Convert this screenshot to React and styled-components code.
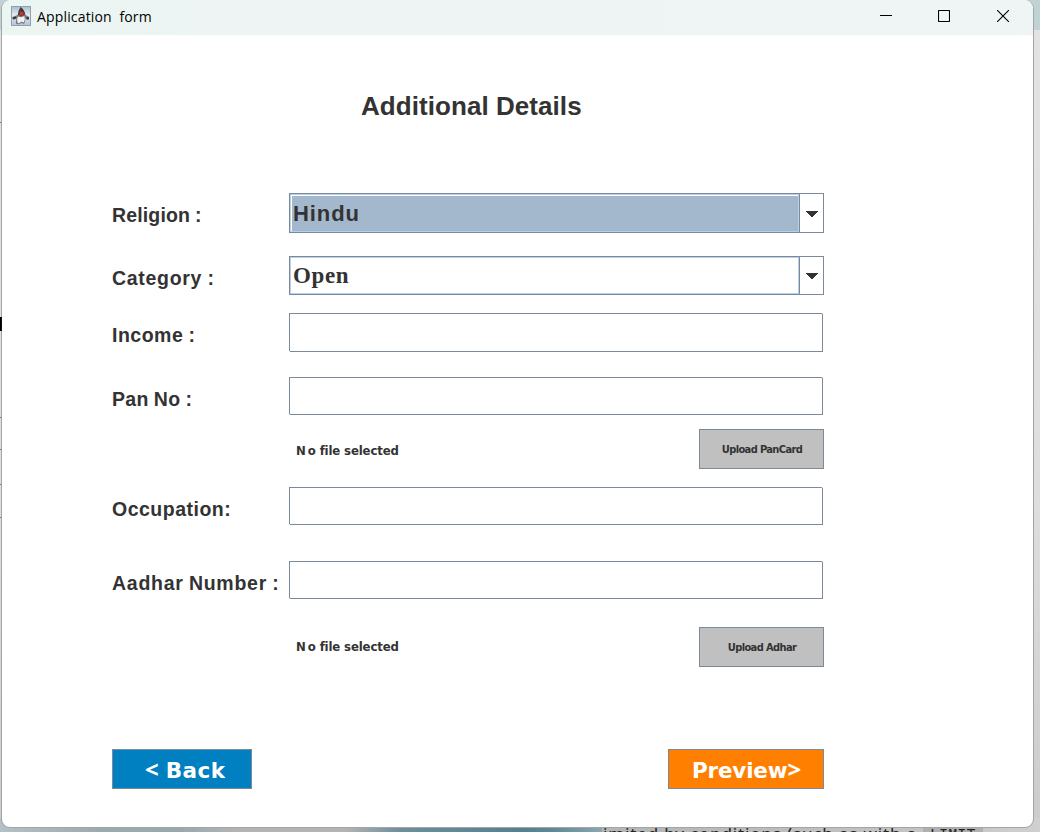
import React from "react";
import styled, { createGlobalStyle } from "styled-components";

const GlobalStyle = createGlobalStyle`
  * { box-sizing: border-box; }
  body { margin: 0; overflow: hidden; background: #d2d2d2; }
`;

const Desktop = styled.div`
  width: 1040px;
  height: 832px;
  overflow: hidden;
  display: flex;
  flex-direction: column;
  padding-left: 1px;
  background:
    linear-gradient(#000, #000) 0 317px / 2px 14px no-repeat,
    linear-gradient(#777, #777) 0 122px / 2px 1px no-repeat,
    linear-gradient(#777, #777) 0 417px / 2px 1px no-repeat,
    linear-gradient(#777, #777) 0 449px / 2px 1px no-repeat,
    linear-gradient(#65869c, #65869c) 0 484px / 2px 1px no-repeat,
    linear-gradient(#777, #777) 0 517px / 2px 1px no-repeat,
    linear-gradient(90deg, #b4c0c5 0, #9aabae 100px, #98a9ad 180px, #b4b4b4 240px, #b5b4b4 345px, #6d8f9b 400px, #55808f 520px, #5c8795 550px, #8ba7ad 602px, #b5b5b5 602px, #c6c6c6 960px, #d0d0d0 1040px) 0 818px / 100% 14px no-repeat,
    linear-gradient(#c1d2d2, #c1d2d2) 0 0 / 100% 30px no-repeat,
    linear-gradient(#e3e3e3 0, #dedede 500px, #cdcdcd 800px);
`;

const Window = styled.main`
  width: 1033px;
  height: 828px;
  flex: none;
  display: flex;
  flex-direction: column;
  overflow: hidden;
  background:
    linear-gradient(#111, #111) 0 317px / 1px 14px no-repeat border-box,
    linear-gradient(#fff, #fff) padding-box,
    #a2a6a7 border-box;
  border: 1px solid transparent;
  border-top: 0;
  border-radius: 9px;
`;

const TitleBar = styled.header`
  height: 35px;
  flex: none;
  display: flex;
  align-items: center;
  padding: 0 24px 3px 9px;
  background: linear-gradient(90deg, #ebf5f2, #eef4f4 30%, #eff4f5);
`;

const WindowTitle = styled.span`
  flex: 1;
  margin-left: 6px;
  padding-top: 2px;
  font: 14px/20px "Open Sans", "Noto Sans", sans-serif;
  letter-spacing: 0.16px;
  white-space: pre;
  color: #000;
`;

const WindowControls = styled.div`
  display: flex;
  gap: 46px;
  svg { display: block; }
  svg:last-child { margin-left: 1px; }
`;

const Form = styled.form`
  width: 712px;
  margin-left: 110px;
`;

const Heading = styled.h1`
  margin: 55px 0 0 249px;
  height: 32px;
  font: bold 26px/32px "Liberation Sans", Arial, sans-serif;
  letter-spacing: 0.06px;
  white-space: nowrap;
  color: #333;
`;

const Row = styled.div`
  display: grid;
  grid-template-columns: 177px 535px;
  height: ${(p) => p.$height}px;
  margin-top: ${(p) => p.$gap}px;
`;

const Label = styled.label`
  align-self: center;
  padding-top: ${(p) => p.$drop ?? 5}px;
  font: bold 19.5px/24px "Liberation Sans", Arial, sans-serif;
  letter-spacing: ${(p) => p.$spacing || 0}px;
  word-spacing: -0.8px;
  white-space: nowrap;
  color: #333;
`;

const Combo = styled.div`
  display: flex;
  border: 1px solid #7a8a99;
`;

const ComboValue = styled.div`
  flex: 1;
  display: flex;
  align-items: center;
  padding: ${(p) => (p.$focused ? 1 : 0)}px 0 0 2px;
  border: 1px solid #b8cfe5;
  background: ${(p) => (p.$focused ? "#a3b8cc" : "#fff")};
  box-shadow: ${(p) => (p.$focused ? "inset 1px 1px #fff" : "none")};
  font: ${(p) => (p.$serif
    ? 'bold 23px/28px "Liberation Serif", Cambria, serif'
    : 'bold 22px/28px "Liberation Sans", Arial, sans-serif')};
  letter-spacing: ${(p) => (p.$serif ? 0.6 : 0.9)}px;
  color: #333;
`;

const ComboButton = styled.div`
  width: 24px;
  display: grid;
  place-items: center;
  padding-top: ${(p) => (p.$focused ? 2 : 0)}px;
  border-left: 1px solid #7a8a99;
`;

const Field = styled.div`
  width: 534px;
  border: 1px solid #7a8a99;
  position: relative;
  &::before, &::after {
    content: "";
    position: absolute;
    width: 1px;
    height: 1px;
    background: #eef1f3;
  }
  &::before { left: -1px; bottom: -1px; }
  &::after { right: -1px; top: -1px; }
`;

const FileRow = styled.div`
  display: flex;
  justify-content: space-between;
  align-items: center;
  height: 40px;
  margin: ${(p) => p.$gap}px 0 0 184px;
`;

const FileStatus = styled.span`
  padding-top: ${(p) => p.$shift}px;
  font: bold 13px/18px "DejaVu Sans Condensed", "DejaVu Sans", sans-serif;
  font-stretch: condensed;
  letter-spacing: -0.13px;
  color: #333;
`;

const Initial = styled.span`
  letter-spacing: 2px;
`;

const UploadButton = styled.button`
  width: 125px;
  height: 40px;
  padding: 2px 0 0 1px;
  border: 1px solid #7a8a99;
  background: #c0c0c0;
  color: #333;
  font: bold 11px/16px "DejaVu Sans Condensed", "DejaVu Sans", sans-serif;
  font-stretch: condensed;
  letter-spacing: -0.62px;
`;

const Actions = styled.div`
  display: flex;
  justify-content: space-between;
  margin-top: 82px;
`;

const ActionButton = styled.button`
  width: ${(p) => p.$width}px;
  height: 40px;
  padding: 3px 0 0 ${(p) => p.$indent}px;
  border: 1px solid #7a8a99;
  background: ${(p) => p.$color};
  color: #fff;
  text-align: left;
  font: bold 21.5px/30px "DejaVu Sans", Verdana, sans-serif;
  letter-spacing: ${(p) => p.$spacing}px;
  word-spacing: -1.5px;
  white-space: pre;
`;

const Chevron = styled.span`
  font-family: "Noto Sans", sans-serif;
  font-size: 24px;
  line-height: 1;
`;

const PageBehind = styled.div`
  height: 4px;
  flex: none;
  overflow: hidden;
  display: flex;
  align-items: flex-start;
  padding-left: 602px;
  font: 17px/20px "Noto Sans", sans-serif;
  letter-spacing: 0.85px;
  white-space: pre;
  color: #222;
`;

const Prose = styled.span`
  width: 320px;
  margin-top: -4px;
`;

const Code = styled.code`
  width: 60px;
  padding-left: 7px;
  margin-top: -2px;
  background: #b0b0b0;
  font: 15px/20px "Liberation Mono", monospace;
  letter-spacing: 0.1px;
`;

const JavaIcon = () => (
  <svg width="20" height="20" viewBox="0 0 20 20">
    <defs>
      <linearGradient id="tile" x1="0" y1="0" x2="0" y2="1">
        <stop offset="0" stopColor="#a9bccb" />
        <stop offset=".45" stopColor="#e6ebee" />
        <stop offset="1" stopColor="#b4c2d2" />
      </linearGradient>
    </defs>
    <rect x=".5" y=".5" width="19" height="19" fill="url(#tile)" stroke="#8ba0b0" />
    <path d="M10 1.500Q14 5 14.500 9L17.500 10.500Q19 12.500 16.500 14L14 12.500Q15 15 13 18L10.500 17L7.500 18.500L5 17.500Q4.500 15 5.500 12.500L3 13.500Q.5 13 1.500 11L6.500 9Z" fill="#77797b" />
    <path d="M9.500 1Q13.500 3.500 14 8.500L11 10L7 9Q7.200 4 9.500 1" fill="#3c3c40" />
    <path d="M7 10.500Q10.500 12 13.300 10Q14.500 14 12.500 16.500L10.500 15.500L7.500 17.500Q5 15 7 10.500" fill="#f2f2f2" />
    <circle cx="10.500" cy="7.500" r="2.100" fill="#d92b27" />
    <path d="M2 12.500L5 11.500M15.500 12L18 12.500" stroke="#3a3a3c" strokeWidth="2" />
  </svg>
);

const Arrow = () => (
  <svg width="12" height="6" viewBox="0 0 12 6" shapeRendering="crispEdges">
    <path d="M0 0H12V1H11V2H10V3H9V4H8V5H7V6H5V5H4V4H3V3H2V2H1V1H0Z" fill="#333" />
  </svg>
);

const Select = ({ value, focused, serif }) => (
  <Combo>
    <ComboValue $focused={focused} $serif={serif}>{value}</ComboValue>
    <ComboButton $focused={focused}><Arrow /></ComboButton>
  </Combo>
);

const FileUpload = ({ gap, action, shift }) => (
  <FileRow $gap={gap}>
    <FileStatus $shift={shift}><Initial>N</Initial>o file selected</FileStatus>
    <UploadButton type="button">{action}</UploadButton>
  </FileRow>
);

export default function App() {
  return (
    <Desktop>
      <GlobalStyle />
      <Window>
        <TitleBar>
          <JavaIcon />
          <WindowTitle>{"Application  form"}</WindowTitle>
          <WindowControls>
            <svg width="12" height="12"><path d="M0 5.500H12" stroke="#000" /></svg>
            <svg width="12" height="12"><rect x=".5" y=".5" width="11" height="11" rx=".6" fill="none" stroke="#000" strokeWidth="1.100" /></svg>
            <svg width="12" height="12"><path d="M0 0L12 12M12 0L0 12" stroke="#000" strokeWidth="1.100" /></svg>
          </WindowControls>
        </TitleBar>
        <Form>
          <Heading>Additional Details</Heading>
          <Row $gap={71} $height={40}>
            <Label $drop={3} $spacing={0.15}>Religion :</Label>
            <Select value="Hindu" focused />
          </Row>
          <Row $gap={23} $height={39}>
            <Label $spacing={0.7}>Category :</Label>
            <Select value="Open" serif />
          </Row>
          <Row $gap={18} $height={39}>
            <Label $spacing={0.5}>Income :</Label>
            <Field />
          </Row>
          <Row $gap={25} $height={38}>
            <Label $spacing={0.35}>Pan No :</Label>
            <Field />
          </Row>
          <FileUpload gap={14} action="Upload PanCard" shift={3} />
          <Row $gap={18} $height={38}>
            <Label $spacing={0.5}>Occupation:</Label>
            <Field />
          </Row>
          <Row $gap={36} $height={38}>
            <Label $spacing={0.73}>Aadhar Number :</Label>
            <Field />
          </Row>
          <FileUpload gap={28} action="Upload Adhar" shift={0} />
          <Actions>
            <ActionButton type="button" $width={140} $indent={32} $color="#0080c0" $spacing={0.5}>
              <Chevron>&lt;</Chevron>{" Back"}
            </ActionButton>
            <ActionButton type="button" $width={156} $indent={23} $color="#ff8000" $spacing={-0.2}>
              Preview<Chevron>&gt;</Chevron>
            </ActionButton>
          </Actions>
        </Form>
      </Window>
      <PageBehind>
        <Prose>imited by conditions (such as with a </Prose>
        <Code>LIMIT</Code>
      </PageBehind>
    </Desktop>
  );
}
